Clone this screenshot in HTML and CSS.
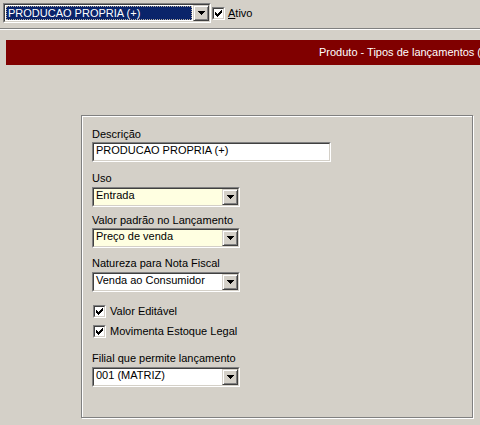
FILE: index.html
```html
<!DOCTYPE html>
<html>
<head>
<meta charset="utf-8">
<link rel="stylesheet" href="styles.css">
</head>
<body>
<div class="toolbar">
  <div class="sunken top-combo">
    <div class="sunken-in white">
      <div class="hl"><span class="hl-text">PRODUCAO PROPRIA (+)</span></div>
      <span class="btn"><svg width="7" height="4" viewBox="0 0 7 4" shape-rendering="crispEdges"><path d="M0 0h7v1h-1v1h-1v1h-1v1h-1v-1h-1v-1h-1v-1h-1z" fill="#000"/></svg></span>
    </div>
  </div>
  <div class="check top-check">
    <span class="cb"><span class="cb-in"><svg width="7" height="7" viewBox="0 0 7 7" shape-rendering="crispEdges"><path d="M6 0h1v1h-1zM5 1h2v1h-2zM0 2h1v1h-1zM4 2h3v1h-3zM0 3h2v1h-2zM3 3h3v1h-3zM0 4h5v1h-5zM1 5h3v1h-3zM2 6h1v1h-1z" fill="#000"/></svg></span></span>
    <span class="cb-label"><u>A</u>tivo</span>
  </div>
</div>
<div class="sep"></div>
<div class="content">
  <div class="titlebar"><span>Produto - Tipos de lançamentos (alteração)</span></div>
  <div class="group">
    <div class="lbl lbl-desc">Descrição</div>
    <div class="sunken field-desc">
      <div class="sunken-in white"><span class="val">PRODUCAO PROPRIA (+)</span></div>
    </div>

    <div class="lbl lbl-uso">Uso</div>
    <div class="sunken sel f-uso">
      <div class="sunken-in yellow"><span class="val">Entrada</span>
        <span class="btn"><svg width="7" height="4" viewBox="0 0 7 4" shape-rendering="crispEdges"><path d="M0 0h7v1h-1v1h-1v1h-1v1h-1v-1h-1v-1h-1v-1h-1z" fill="#000"/></svg></span>
      </div>
    </div>

    <div class="lbl lbl-valor">Valor padrão no Lançamento</div>
    <div class="sunken sel f-valor">
      <div class="sunken-in yellow"><span class="val">Preço de venda</span>
        <span class="btn"><svg width="7" height="4" viewBox="0 0 7 4" shape-rendering="crispEdges"><path d="M0 0h7v1h-1v1h-1v1h-1v1h-1v-1h-1v-1h-1v-1h-1z" fill="#000"/></svg></span>
      </div>
    </div>

    <div class="lbl lbl-nat">Natureza para Nota Fiscal</div>
    <div class="sunken sel f-nat">
      <div class="sunken-in white"><span class="val">Venda ao Consumidor</span>
        <span class="btn"><svg width="7" height="4" viewBox="0 0 7 4" shape-rendering="crispEdges"><path d="M0 0h7v1h-1v1h-1v1h-1v1h-1v-1h-1v-1h-1v-1h-1z" fill="#000"/></svg></span>
      </div>
    </div>

    <div class="check chk1">
      <span class="cb"><span class="cb-in"><svg width="7" height="7" viewBox="0 0 7 7" shape-rendering="crispEdges"><path d="M6 0h1v1h-1zM5 1h2v1h-2zM0 2h1v1h-1zM4 2h3v1h-3zM0 3h2v1h-2zM3 3h3v1h-3zM0 4h5v1h-5zM1 5h3v1h-3zM2 6h1v1h-1z" fill="#000"/></svg></span></span>
      <span class="cb-label">Valor Editável</span>
    </div>
    <div class="check chk2">
      <span class="cb"><span class="cb-in"><svg width="7" height="7" viewBox="0 0 7 7" shape-rendering="crispEdges"><path d="M6 0h1v1h-1zM5 1h2v1h-2zM0 2h1v1h-1zM4 2h3v1h-3zM0 3h2v1h-2zM3 3h3v1h-3zM0 4h5v1h-5zM1 5h3v1h-3zM2 6h1v1h-1z" fill="#000"/></svg></span></span>
      <span class="cb-label">Movimenta Estoque Legal</span>
    </div>

    <div class="lbl lbl-filial">Filial que permite lançamento</div>
    <div class="sunken sel f-filial">
      <div class="sunken-in white"><span class="val">001 (MATRIZ)</span>
        <span class="btn"><svg width="7" height="4" viewBox="0 0 7 4" shape-rendering="crispEdges"><path d="M0 0h7v1h-1v1h-1v1h-1v1h-1v-1h-1v-1h-1v-1h-1z" fill="#000"/></svg></span>
      </div>
    </div>
  </div>
</div>
</body>
</html>
```

FILE: styles.css
```css
* { box-sizing: border-box; }
html, body { margin: 0; padding: 0; }
body {
  width: 480px;
  height: 425px;
  overflow: hidden;
  background: #d4d0c8;
  font-family: "Liberation Sans", Arial, sans-serif;
  font-size: 11px;
  color: #000;
}

/* toolbar */
.toolbar {
  height: 28px;
  display: flex;
  align-items: flex-start;
  padding: 3px 0 0 3px;
}
.top-combo { width: 208px; height: 20px; flex: none; }
.hl {
  flex: 1;
  margin: 1px;
  background: #0a246a;
  border: 1px dotted #b8b0a0;
  color: #fff;
  line-height: 11px;
  padding: 1px 0 0 1px;
  white-space: nowrap;
  overflow: hidden;
}
.top-check { margin: 4px 0 0 7px; }
.top-check .cb-label { margin-left: 3px; }

.sep {
  height: 2px;
  border-top: 1px solid #808080;
  border-bottom: 1px solid #fff;
}

/* sunken controls */
.sunken {
  border: 1px solid;
  border-color: #808080 #fff #fff #808080;
}
.sunken-in {
  height: 100%;
  display: flex;
  border: 1px solid;
  border-color: #404040 #d4d0c8 #d4d0c8 #404040;
}
.white { background: #fff; }
.yellow { background: #ffffe1; }
.val {
  flex: 1;
  padding: 1px 0 0 2px;
  line-height: 11px;
  white-space: nowrap;
  overflow: hidden;
}
.btn {
  width: 16px;
  height: 100%;
  flex: none;
  background: #d4d0c8;
  border: 1px solid;
  border-color: #d4d0c8 #404040 #404040 #d4d0c8;
  box-shadow: inset 1px 1px 0 #fff, inset -1px -1px 0 #808080;
  display: flex;
  align-items: center;
  justify-content: center;
}
.btn svg { display: block; }

/* content */
.content {
  padding: 10px 0 0 6px;
}
.titlebar {
  height: 25px;
  background: #800000;
  color: #fff;
  font-size: 11px;
  line-height: 25px;
  padding-left: 313px;
  white-space: nowrap;
  overflow: hidden;
}
.group {
  margin: 50px 0 0 75px;
  width: 392px;
  height: 303px;
  border: 1px solid #808080;
  box-shadow: inset 1px 1px 0 #fff, 1px 1px 0 #fff;
  padding: 12px 0 0 10px;
  display: flex;
  flex-direction: column;
  align-items: flex-start;
}
.lbl { line-height: 13px; height: 13px; white-space: nowrap; }
.field-desc { width: 239px; height: 20px; margin-top: 1px; }
.sel { width: 148px; height: 20px; }

.lbl-uso { margin-top: 10px; }
.f-uso { margin-top: 2px; }
.lbl-valor { margin-top: 7px; }
.f-valor { margin-top: 1px; }
.lbl-nat { margin-top: 9px; }
.f-nat { margin-top: 2px; }
.chk1 { margin-top: 13px; }
.chk2 { margin-top: 7px; }
.lbl-filial { margin-top: 14px; }
.f-filial { margin-top: 2px; }

/* checkbox */
.check {
  display: flex;
  align-items: center;
  height: 13px;
  margin-left: 1px;
}
.cb {
  width: 13px;
  height: 13px;
  flex: none;
  border: 1px solid;
  border-color: #808080 #fff #fff #808080;
}
.cb-in {
  display: flex;
  width: 100%;
  height: 100%;
  background: #fff;
  border: 1px solid;
  border-color: #404040 #d4d0c8 #d4d0c8 #404040;
  padding: 1px 0 0 1px;
}
.cb-in svg { display: block; }
.cb-label { margin-left: 4px; line-height: 13px; white-space: nowrap; }
```
